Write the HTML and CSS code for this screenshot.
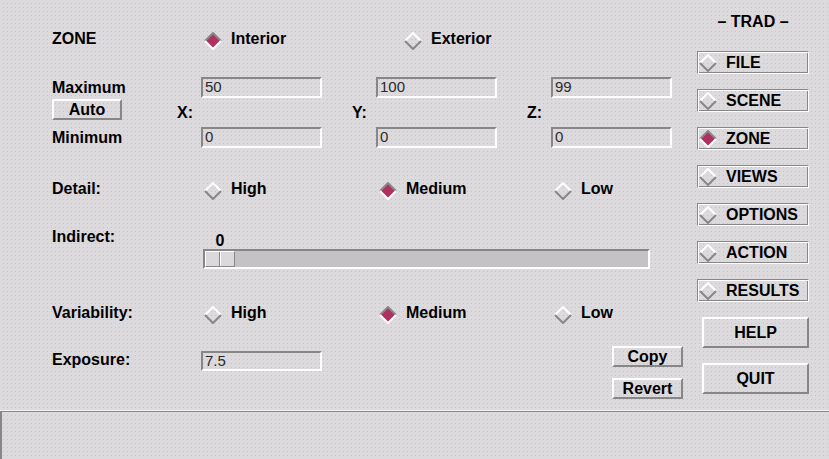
FILE: index.html
```html
<!DOCTYPE html>
<html>
<head>
  <meta charset="UTF-8">
  <title>TRAD - Zone</title>
  <link rel="stylesheet" href="styles.css">
</head>
<body>
  <svg class="defs" width="0" height="0">
    <symbol id="dia-off" viewBox="0 0 18 18">
      <path d="M1 9 L9 1 L17 9" fill="none" stroke="#fff" stroke-width="2"/>
      <path d="M1 9 L9 17 L17 9" fill="none" stroke="#878787" stroke-width="2"/>
    </symbol>
    <symbol id="dia-on" viewBox="0 0 18 18">
      <path d="M9 1 L17 9 L9 17 L1 9 Z" fill="#b03060"/>
      <path d="M1 9 L9 1 L17 9" fill="none" stroke="#878787" stroke-width="2"/>
      <path d="M1 9 L9 17 L17 9" fill="none" stroke="#fff" stroke-width="2"/>
    </symbol>
  </svg>

  <div class="window">
    <div class="main">
      <div class="form">

        <div class="row zone-row">
          <div class="label">ZONE</div>
          <div class="choice"><svg><use href="#dia-on"/></svg>Interior</div>
          <div class="choice"><svg><use href="#dia-off"/></svg>Exterior</div>
        </div>

        <div class="extent">
          <div class="label">Maximum</div>
          <input class="field c-x" type="text" value="50" readonly>
          <input class="field c-y" type="text" value="100" readonly>
          <input class="field c-z" type="text" value="99" readonly>

          <button class="btn auto-btn">Auto</button>
          <div class="axis a-x">X:</div>
          <div class="axis a-y">Y:</div>
          <div class="axis a-z">Z:</div>

          <div class="label">Minimum</div>
          <input class="field c-x" type="text" value="0" readonly>
          <input class="field c-y" type="text" value="0" readonly>
          <input class="field c-z" type="text" value="0" readonly>
        </div>

        <div class="row detail-row">
          <div class="label">Detail:</div>
          <div class="choice"><svg><use href="#dia-off"/></svg>High</div>
          <div class="choice"><svg><use href="#dia-on"/></svg>Medium</div>
          <div class="choice"><svg><use href="#dia-off"/></svg>Low</div>
        </div>

        <div class="indirect">
          <div class="label">Indirect:</div>
          <div class="slider">
            <div class="slider-value">0</div>
            <div class="trough">
              <div class="thumb"><span></span><span></span></div>
            </div>
          </div>
        </div>

        <div class="row variability-row">
          <div class="label">Variability:</div>
          <div class="choice"><svg><use href="#dia-off"/></svg>High</div>
          <div class="choice"><svg><use href="#dia-on"/></svg>Medium</div>
          <div class="choice"><svg><use href="#dia-off"/></svg>Low</div>
        </div>

        <div class="exposure">
          <div class="label">Exposure:</div>
          <input class="field" type="text" value="7.5" readonly>
          <div class="edit-buttons">
            <button class="btn">Copy</button>
            <button class="btn">Revert</button>
          </div>
        </div>

      </div>

      <div class="side">
        <div class="title">– TRAD –</div>
        <div class="menu-btn"><svg><use href="#dia-off"/></svg>FILE</div>
        <div class="menu-btn"><svg><use href="#dia-off"/></svg>SCENE</div>
        <div class="menu-btn"><svg><use href="#dia-on"/></svg>ZONE</div>
        <div class="menu-btn"><svg><use href="#dia-off"/></svg>VIEWS</div>
        <div class="menu-btn"><svg><use href="#dia-off"/></svg>OPTIONS</div>
        <div class="menu-btn"><svg><use href="#dia-off"/></svg>ACTION</div>
        <div class="menu-btn"><svg><use href="#dia-off"/></svg>RESULTS</div>
        <button class="btn cmd-btn">HELP</button>
        <button class="btn cmd-btn">QUIT</button>
      </div>
    </div>

    <div class="status"></div>
  </div>
</body>
</html>
```

FILE: styles.css
```css
body {
  margin: 0;
  font-family: "Liberation Sans", Arial, sans-serif;
  font-size: 16px;
  color: #000;
  background-color: #dddadd;
  background-image:
    linear-gradient(to right, #dddadd 3px, transparent 3px),
    linear-gradient(to bottom, #dddadd 3px, #c6c3c6 3px);
  background-size: 4px 4px;
}

.defs {
  position: absolute;
}

.window {
  width: 829px;
  height: 459px;
  display: flex;
  flex-direction: column;
  overflow: hidden;
}

.main {
  height: 410px;
  display: flex;
}

.form {
  flex: 1;
  min-width: 0;
  padding: 28px 14px 0 52px;
}

.label {
  width: 149px;
  flex-shrink: 0;
  font-weight: bold;
}

/* radio rows */
.row {
  display: flex;
  align-items: center;
  height: 22px;
}

.choice {
  display: flex;
  align-items: center;
  width: 175px;
  flex-shrink: 0;
  font-weight: bold;
}

.zone-row .choice {
  width: 200px;
}

.choice svg,
.menu-btn svg {
  width: 18px;
  height: 18px;
  flex-shrink: 0;
}

.choice svg {
  margin: 3px 9px 0 3px;
}

.detail-row {
  margin-top: 30px;
}

.variability-row {
  margin-top: 33px;
}

/* maximum / minimum block */
.extent {
  margin-top: 27px;
  display: grid;
  grid-template-columns: 125px 24px 121px 30px 24px 121px 30px 24px 121px;
  grid-template-rows: 21px 29px 21px;
  align-items: center;
}

.extent .label {
  grid-column: 1;
  width: auto;
}

.c-x { grid-column: 3; }
.c-y { grid-column: 6; }
.c-z { grid-column: 9; }
.a-x { grid-column: 2; }
.a-y { grid-column: 5; }
.a-z { grid-column: 8; }

.axis {
  font-weight: bold;
}

.field {
  box-sizing: border-box;
  width: 121px;
  height: 21px;
  margin: 0;
  padding: 0 2px 2px 2px;
  border: 2px solid;
  border-color: #878787 #fff #fff #878787;
  background: transparent;
  font-family: "Liberation Sans", Arial, sans-serif;
  font-size: 15px;
  color: #2a2a2a;
  outline: none;
}

/* raised push buttons */
.btn {
  box-sizing: border-box;
  margin: 0;
  padding: 0;
  border: 2px solid;
  border-color: #fff #878787 #878787 #fff;
  background: transparent;
  font-family: "Liberation Sans", Arial, sans-serif;
  font-size: 16px;
  font-weight: bold;
  color: #000;
  text-align: center;
  height: 21px;
  line-height: 16px;
}

.auto-btn {
  grid-column: 1;
  align-self: start;
  width: 70px;
  margin-top: 1px;
}

/* slider */
.indirect {
  margin-top: 27px;
  display: flex;
  align-items: flex-start;
}

.indirect .label {
  line-height: 20px;
}

.slider {
  margin: 2px 0 0 2px;
}

.slider-value {
  width: 30px;
  margin-left: 2px;
  text-align: center;
  font-weight: bold;
  line-height: 21px;
  padding-top: 1px;
  height: 20px;
  box-sizing: border-box;
}

.trough {
  box-sizing: border-box;
  width: 447px;
  height: 20px;
  border: 2px solid;
  border-color: #878787 #fff #fff #878787;
  background: #c4c2c4;
}

.thumb {
  box-sizing: border-box;
  width: 30px;
  height: 16px;
  display: flex;
  border: 1px solid;
  border-color: #fff #878787 #878787 #fff;
  background: #dcd9dc;
}

.thumb span {
  flex: 1;
}

.thumb span:first-child {
  border-right: 1px solid #878787;
}

.thumb span + span {
  border-left: 1px solid #fff;
}

/* exposure + copy/revert */
.exposure {
  margin-top: 22px;
  display: flex;
  align-items: flex-start;
}

.exposure .label {
  margin-top: 4px;
  line-height: 20px;
}

.exposure .field {
  margin-top: 5px;
  height: 20px;
}

.edit-buttons {
  margin-left: auto;
  width: 71px;
  flex-shrink: 0;
  display: flex;
  flex-direction: column;
  gap: 11px;
}

/* right-hand menu */
.side {
  width: 112px;
  flex-shrink: 0;
  margin-right: 20px;
  padding-top: 7px;
  display: flex;
  flex-direction: column;
  gap: 15px;
}

.title {
  height: 29px;
  line-height: 29px;
  text-align: center;
  font-weight: bold;
}

.menu-btn {
  box-sizing: border-box;
  height: 23px;
  display: flex;
  align-items: center;
  padding-left: 1px;
  border: 1px solid;
  border-color: #878787 #fff #fff #878787;
  box-shadow: inset 1px 1px 0 #fff, inset -1px -1px 0 #878787;
  font-weight: bold;
}

.menu-btn svg {
  margin-right: 9px;
}

.cmd-btn {
  align-self: flex-end;
  width: 107px;
  height: 31px;
}

/* message area */
.status {
  height: 49px;
  box-sizing: border-box;
  border-top: 1px solid #f4f4f4;
  box-shadow: inset 2px 1px 0 #878787;
}
```
